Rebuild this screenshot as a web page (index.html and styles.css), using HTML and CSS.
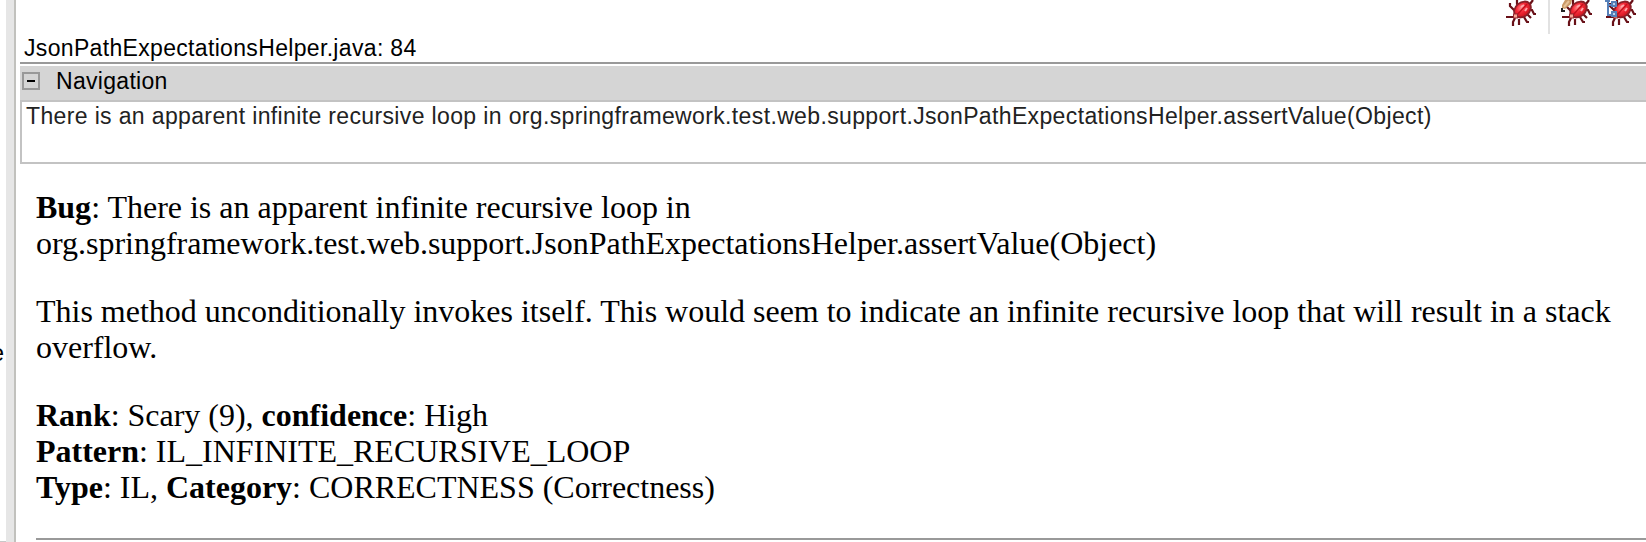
FILE: index.html
```html
<!DOCTYPE html>
<html lang="en">
<head>
<meta charset="utf-8">
<title>Bug Info</title>
<link rel="stylesheet" href="styles.css">
</head>
<body>
<svg class="defs" width="0" height="0" aria-hidden="true">
  <defs>
    <radialGradient id="shell" cx=".5" cy=".35" r=".7">
      <stop offset="0" stop-color="#ff8a8a"/>
      <stop offset=".4" stop-color="#f52a38"/>
      <stop offset="1" stop-color="#c01018"/>
    </radialGradient>
    <g id="bug">
      <g fill="none" stroke="#681017" stroke-width="2.200">
        <path d="M5 3v3l5 5M12 0v4l3 3M25 4l3-4M1 17h8M24 10h3l2 4h2M8 26v-4l2-4M14 25v-6M19 17l3 5h2M22 14l4 4"/>
      </g>
      <ellipse cx="17.500" cy="9.500" rx="9.200" ry="7" transform="rotate(-40 17.500 9.500)" fill="url(#shell)" stroke="#8a2028" stroke-width="1.800"/>
      <path d="M12 15L22 4" stroke="#c5101c" stroke-width="1.500"/>
      <path d="M16 7l3-2M20 11l2-3" stroke="#ffa5a8" stroke-width="2"/>
      <rect x="8.500" y="14" width="4" height="4" fill="#f7a594" stroke="#962830"/>
    </g>
  </defs>
</svg>
<div class="window">
  <div class="left-pane"><span class="clipped">e</span></div>
  <div class="sash"></div>
  <main class="view">
    <div class="toolbar">
      <svg class="icon" viewBox="0 0 36 32"><use href="#bug" x="0" y="0"/></svg>
      <div class="separator"></div>
      <svg class="icon edit" viewBox="0 0 36 32"><use href="#bug" x="0" y="0"/><path d="M1 8V5l3-5h7l-1 4-6 5z" fill="#c99a68"/><path d="M3 7l5-6" stroke="#e6c197" stroke-width="2"/><path d="M0 8h2v2h2v2H0z" fill="#222"/></svg>
      <svg class="icon tree" viewBox="0 0 36 32"><use href="#bug" x="2" y="0"/><path d="M2 1h5M5 0v15h4M5 5h4" fill="none" stroke="#5680b8" stroke-width="2"/><path d="M9 2h4v4H9zM9 12h4v4H9z" fill="#bfd1ea" stroke="#5680b8" stroke-width="2"/></svg>
    </div>
    <div class="location"><span class="location-text">JsonPathExpectationsHelper.java: 84</span></div>
    <div class="section-title"><span class="toggle"></span><span class="section-text">Navigation</span></div>
    <div class="message"><span class="message-text">There is an apparent infinite recursive loop in org.springframework.test.web.support.JsonPathExpectationsHelper.assertValue(Object)</span></div>
    <article class="details">
      <p><b>Bug</b>: There is an apparent infinite recursive loop in<br>org.springframework.test.web.support.JsonPathExpectationsHelper.assertValue(Object)</p>
      <p>This method unconditionally invokes itself. This would seem to indicate an infinite recursive loop that will result in a stack<br>overflow.</p>
      <p><b>Rank</b>: Scary (9), <b>confidence</b>: High<br><b>Pattern</b>: IL_INFINITE_RECURSIVE_LOOP<br><b>Type</b>: IL, <b>Category</b>: CORRECTNESS (Correctness)</p>
      <hr>
    </article>
  </main>
</div>
</body>
</html>
```
FILE: styles.css
```css
* { box-sizing: border-box; }
body { margin: 0; background: #fff; color: #000; overflow: hidden; }
.defs { position: absolute; }
.window { display: flex; width: 1646px; height: 542px; overflow: hidden; font: 23px/26px "Liberation Sans", Arial, sans-serif; }
.left-pane { width: 6px; display: flex; justify-content: flex-end; padding-top: 340px; overflow: hidden; border-bottom: 1px solid #c8c8c8; }
.clipped { margin-right: 2px; }
.sash { width: 10px; background: #e6e6e6; border-right: 2px solid #c1c1bd; }
.view { width: 1630px; padding-left: 4px; }
.toolbar { display: flex; height: 34px; justify-content: flex-end; padding-right: 7px; }
.icon { width: 36px; height: 32px; }
.separator { width: 2px; height: 34px; margin: 0 11px 0 7px; background: #e2e2e2; }
.tree { margin-left: 6px; }
.location { height: 30px; padding: 1px 0 0 4px; border-bottom: 2px solid #999; white-space: nowrap; }
.location-text { letter-spacing: .33px; }
.section-title { display: flex; align-items: center; height: 34px; margin-top: 2px; padding: 0 0 4px 2px; background: #d5d5d5; }
.toggle { display: flex; align-items: center; justify-content: center; width: 18px; height: 18px; border: 2px solid #999; }
.toggle::before { content: ""; width: 8px; height: 2px; background: #000; }
.section-text { margin-left: 16px; letter-spacing: .3px; }
.message { height: 64px; padding: 1px 0 0 4px; border: 2px solid #c3c3c3; border-right: 0; color: #222; white-space: nowrap; }
.message-text { letter-spacing: .36px; }
.details { padding: 25px 0 0 16px; font: 32px/36px "Liberation Serif", "Times New Roman", serif; letter-spacing: -.01px; white-space: nowrap; font-variant-ligatures: common-ligatures; }
.details p { margin: 0 0 32px; }
.details hr { height: 2px; margin: 33px 0 0; border: 0; background: #999; }
```
